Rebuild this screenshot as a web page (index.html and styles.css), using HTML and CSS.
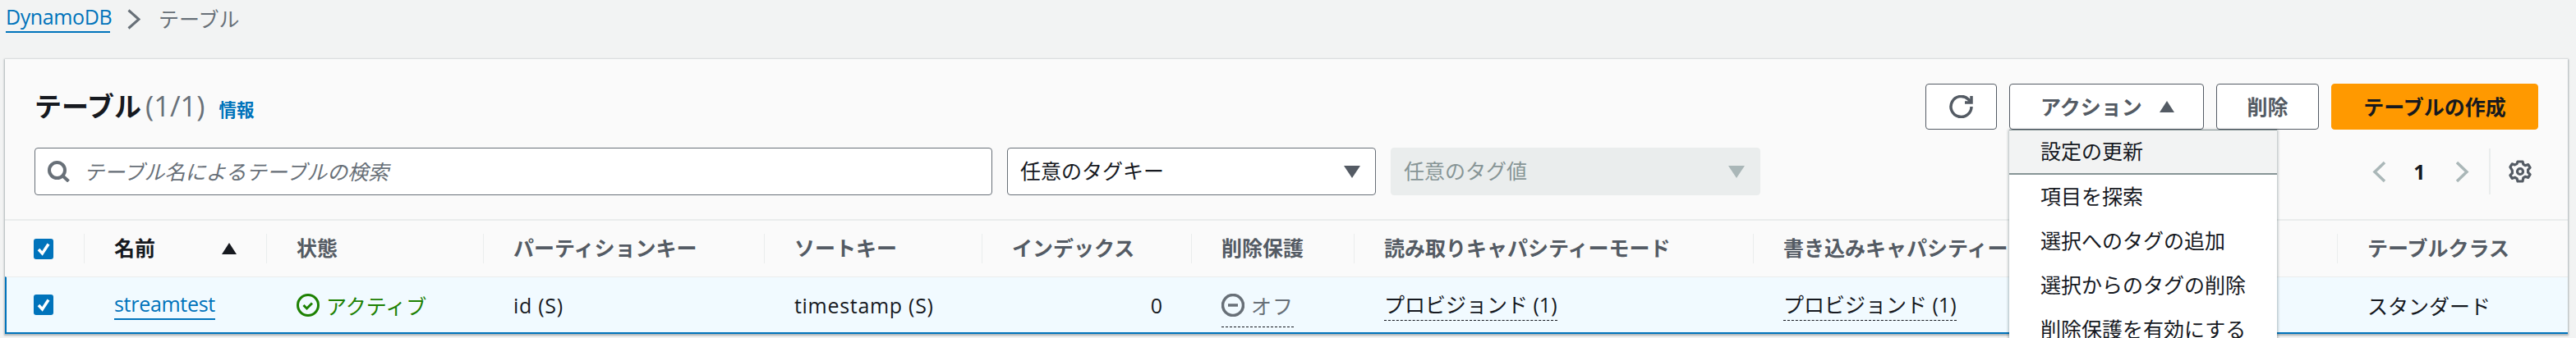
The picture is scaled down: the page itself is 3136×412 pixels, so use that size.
FILE: index.html
```html
<!DOCTYPE html>
<html lang="ja">
<head>
<meta charset="utf-8">
<title>テーブル</title>
<link rel="stylesheet" href="styles.css">
</head>
<body>
<nav class="crumbs">
  <a class="crumb-link">DynamoDB</a>
  <svg class="crumb-sep" viewBox="0 0 16 25"><path d="M1.5 1.5 14 12.5 1.5 23.5"/></svg>
  <span class="crumb-cur">テーブル</span>
</nav>
<section class="card">
  <header class="head">
    <div class="title-wrap">
      <h1 class="title">テーブル</h1>
      <span class="count">(1/1)</span>
      <a class="info">情報</a>
    </div>
    <div class="actions">
      <button class="btn btn-icon">
        <svg class="ico-refresh" viewBox="0 0 29 28"><path d="M27 14a12.5 12.5 0 1 1-3.8-9L27 9"/><path d="M27 1v8h-8"/></svg>
      </button>
      <div class="dropdown">
        <button class="btn btn-action">アクション<span class="caret-up"></span></button>
        <ul class="menu">
          <li class="menu-item menu-active">設定の更新</li>
          <li class="menu-item">項目を探索</li>
          <li class="menu-item">選択へのタグの追加</li>
          <li class="menu-item">選択からのタグの削除</li>
          <li class="menu-item">削除保護を有効にする</li>
        </ul>
      </div>
      <button class="btn btn-del">削除</button>
      <button class="btn btn-primary">テーブルの作成</button>
    </div>
  </header>
  <div class="filters">
    <div class="search">
      <svg class="ico-search" viewBox="0 0 27 26"><circle cx="11.5" cy="11.5" r="9.5"/><path d="M18.5 18.5 25.5 25"/></svg>
      <span class="placeholder">テーブル名によるテーブルの検索</span>
    </div>
    <div class="select">任意のタグキー<span class="caret-down"></span></div>
    <div class="select select-off">任意のタグ値<span class="caret-down caret-off"></span></div>
    <div class="pager">
      <svg class="ico-chev" viewBox="0 0 17 27"><path d="M15 2 3 13.5 15 25"/></svg>
      <span class="page-num">1</span>
      <svg class="ico-chev" viewBox="0 0 17 27"><path d="M2 2 14 13.5 2 25"/></svg>
      <span class="pager-div"></span>
      <svg class="ico-gear" viewBox="0 0 30 30"><path d="M18 3l.9 3.4 2.6 1.3 3.3-1.1 2.3 3.8-2.500 2.400v3.400l2.500 2.400-2.300 3.800-3.300-1.100-2.600 1.300L18 27h-6l-.9-3.400-2.600-1.300-3.300 1.100-2.300-3.800 2.500-2.400v-3.400L2.900 9.600 5.200 5.800l3.300 1.100 2.600-1.300L12 3z"/><circle cx="15" cy="15" r="3.500"/></svg>
    </div>
  </div>
  <div class="table">
    <div class="th th-check"><span class="check"><svg viewBox="0 0 24 25"><path d="M6 13l4.500 5L18 6.500"/></svg></span></div>
    <div class="th th-name"><span>名前</span><span class="sort"></span></div>
    <div class="th">状態</div>
    <div class="th">パーティションキー</div>
    <div class="th">ソートキー</div>
    <div class="th">インデックス</div>
    <div class="th">削除保護</div>
    <div class="th">読み取りキャパシティーモード</div>
    <div class="th">書き込みキャパシティーモード</div>
    <div class="th">テーブルクラス</div>

    <div class="td td-check"><span class="check"><svg viewBox="0 0 24 25"><path d="M6 13l4.500 5L18 6.500"/></svg></span></div>
    <div class="td"><a class="link">streamtest</a></div>
    <div class="td status-ok">
      <svg class="ico-status" viewBox="0 0 28 28"><circle cx="14" cy="14" r="12.500"/><path d="M8.500 14l4 4 6.500-6.500"/></svg>アクティブ
    </div>
    <div class="td td-key">id (S)</div>
    <div class="td td-key">timestamp (S)</div>
    <div class="td td-num">0</div>
    <div class="td"><span class="status-off"><svg class="ico-status" viewBox="0 0 28 28"><circle cx="14" cy="14" r="12.500"/><path d="M8 14h12"/></svg>オフ</span></div>
    <div class="td"><span class="dashed">プロビジョンド (1)</span></div>
    <div class="td"><span class="dashed">プロビジョンド (1)</span></div>
    <div class="td">スタンダード</div>
  </div>
</section>
</body>
</html>
```
FILE: styles.css
```css
* { box-sizing: border-box; }
html, body { height: 412px; overflow: hidden; }
body {
  margin: 0;
  background: #f2f3f3;
  color: #16191f;
  font-family: "Open Sans", "Noto Sans CJK JP", sans-serif;
  font-size: 25px;
}
.crumbs {
  height: 72px;
  padding: 3px 0 0 7px;
  display: flex;
  align-items: flex-start;
  color: #687078;
}
.crumb-link {
  color: #0073bb;
  height: 37px;
  line-height: 34px;
  border-bottom: 2px solid #0073bb;
  letter-spacing: -0.4px;
  width: 127px;
}
.crumb-sep {
  width: 16px;
  height: 25px;
  margin: 8px 22px 0 21px;
  fill: none;
  stroke: #687078;
  stroke-width: 3;
}
.crumb-cur { line-height: 40px; }
.card {
  margin: 0 10px 0 6px;
  height: 335px;
  padding-top: 30px;
  background: #fafafa;
  box-shadow: 0 1px 2px 1px rgba(0, 28, 36, 0.3);
}
.head {
  display: flex;
  justify-content: space-between;
  align-items: center;
  height: 56px;
  padding: 0 36px;
}
.title-wrap { display: flex; align-items: baseline; padding-bottom: 4px; }
.title { margin: 0; font-size: 33px; font-weight: 700; line-height: 42px; }
.count { font-size: 34.500px; color: #687078; margin-left: 5px; }
.info { font-size: 21.500px; font-weight: 700; color: #0073bb; margin: 0 0 2px 17px; }
.actions { display: flex; gap: 15px; height: 56px; }
.btn {
  height: 56px;
  font: inherit;
  font-weight: 700;
  color: #545b64;
  background: #fff;
  border: 1.5px solid #545b64;
  border-radius: 4px;
  padding: 0 0 3px;
}
.btn-icon { width: 87px; display: flex; align-items: center; justify-content: center; padding: 0; }
.ico-refresh { width: 29px; height: 28px; fill: none; stroke: #545b64; stroke-width: 3.500; }
.dropdown { position: relative; }
.btn-action {
  width: 237px;
  display: flex;
  align-items: center;
  padding-left: 37px;
}
.caret-up {
  width: 0;
  height: 0;
  margin: 3px 0 0 21px;
  border-left: 9.500px solid transparent;
  border-right: 9.500px solid transparent;
  border-bottom: 14px solid #545b64;
}
.btn-del { width: 125px; }
.btn-primary { width: 252px; background: #f90; border-color: #f90; color: #16191f; }
.menu {
  position: absolute;
  top: 56px;
  left: 0;
  z-index: 5;
  width: 326px;
  margin: 0;
  padding: 0;
  list-style: none;
  background: #fff;
  box-shadow: 0 1px 3px 1px rgba(0, 28, 36, 0.3);
}
.menu-item {
  height: 54px;
  padding: 0 0 4px 38px;
  display: flex;
  align-items: center;
  white-space: nowrap;
}
.menu-active {
  background: #f2f3f3;
  border-top: 1px solid #879596;
  border-bottom: 2px solid #879596;
  height: 55px;
}
.filters {
  display: flex;
  align-items: center;
  height: 58px;
  margin-top: 22px;
  padding-left: 36px;
  gap: 18px;
}
.search, .select {
  height: 58px;
  background: #fff;
  border: 1.5px solid #687078;
  border-radius: 4px;
  display: flex;
  align-items: center;
}
.search { width: 1166px; padding-left: 15px; }
.ico-search { width: 27px; height: 26px; fill: none; stroke: #687078; stroke-width: 4; flex: none; }
.placeholder { margin: 0 0 2px 17px; font-style: italic; color: #687078; }
.select { width: 449px; padding: 0 18px 4px 15px; justify-content: space-between; }
.select-off { width: 450px; background: #eaeded; border-color: #eaeded; color: #879596; }
.caret-down {
  width: 0;
  height: 0;
  margin-top: 4px;
  border-left: 10px solid transparent;
  border-right: 10px solid transparent;
  border-top: 15px solid #545b64;
}
.caret-off { border-top-color: #aab7b8; }
.pager {
  margin-left: 727px;
  display: flex;
  align-items: center;
  height: 58px;
}
.ico-chev { width: 17px; height: 27px; fill: none; stroke: #aab7b8; stroke-width: 3.500; flex: none; }
.page-num { width: 84px; padding-right: 3px; text-align: center; font-weight: 700; }
.pager-div { width: 2px; height: 56px; background: #eaeded; margin: 0 21px 0 24px; }
.ico-gear { width: 30px; height: 30px; fill: none; stroke: #545b64; stroke-width: 3.200; stroke-linejoin: round; flex: none; }
.table {
  display: grid;
  grid-template-columns: 96px 222px 264px 342px 265px 255px 198px 486px 711px 281px;
  grid-template-rows: 68px 70px;
  margin-top: 29px;
  border-top: 2px solid #eaeded;
}
.th {
  align-self: center;
  height: 36px;
  display: flex;
  align-items: center;
  padding: 0 0 4px 36px;
  border-left: 1px solid #eaeded;
  color: #545b64;
  font-weight: 700;
  white-space: nowrap;
}
.th-check { border-left: 0; padding: 0 0 0 35px; }
.th-name { color: #16191f; justify-content: space-between; padding-right: 36px; }
.sort {
  width: 0;
  height: 0;
  margin-top: 4px;
  border-left: 9px solid transparent;
  border-right: 9px solid transparent;
  border-bottom: 14px solid #16191f;
}
.check {
  width: 24px;
  height: 25px;
  border-radius: 3px;
  background: #0073bb;
  display: block;
}
.check svg { display: block; width: 24px; height: 25px; fill: none; stroke: #fff; stroke-width: 3.500; }
.td {
  display: flex;
  align-items: center;
  padding-left: 37px;
  background: #f1faff;
  border-top: 1px solid #eaeded;
  border-bottom: 2px solid #0073bb;
  white-space: nowrap;
}
.td-check { padding-left: 33px; border-left: 2px solid #0073bb; }
.td-key { letter-spacing: 0.700px; }
.link { color: #0073bb; height: 37px; line-height: 34px; border-bottom: 2px solid #0073bb; letter-spacing: -0.300px; }
.ico-status { width: 28px; height: 28px; fill: none; stroke: currentColor; stroke-width: 3; margin-right: 8px; flex: none; }
.status-ok { color: #1d8102; }
.status-off {
  display: flex;
  align-items: center;
  color: #687078;
  height: 44px;
  margin-top: 10px;
  padding-bottom: 8px;
  letter-spacing: 1px;
  border-bottom: 1.500px dashed #16191f;
}
.status-off .ico-status { stroke-width: 3.500; }
.td-num { justify-content: flex-end; padding-right: 35px; }
.dashed { line-height: 38px; border-bottom: 1.500px dashed #16191f; }
```
